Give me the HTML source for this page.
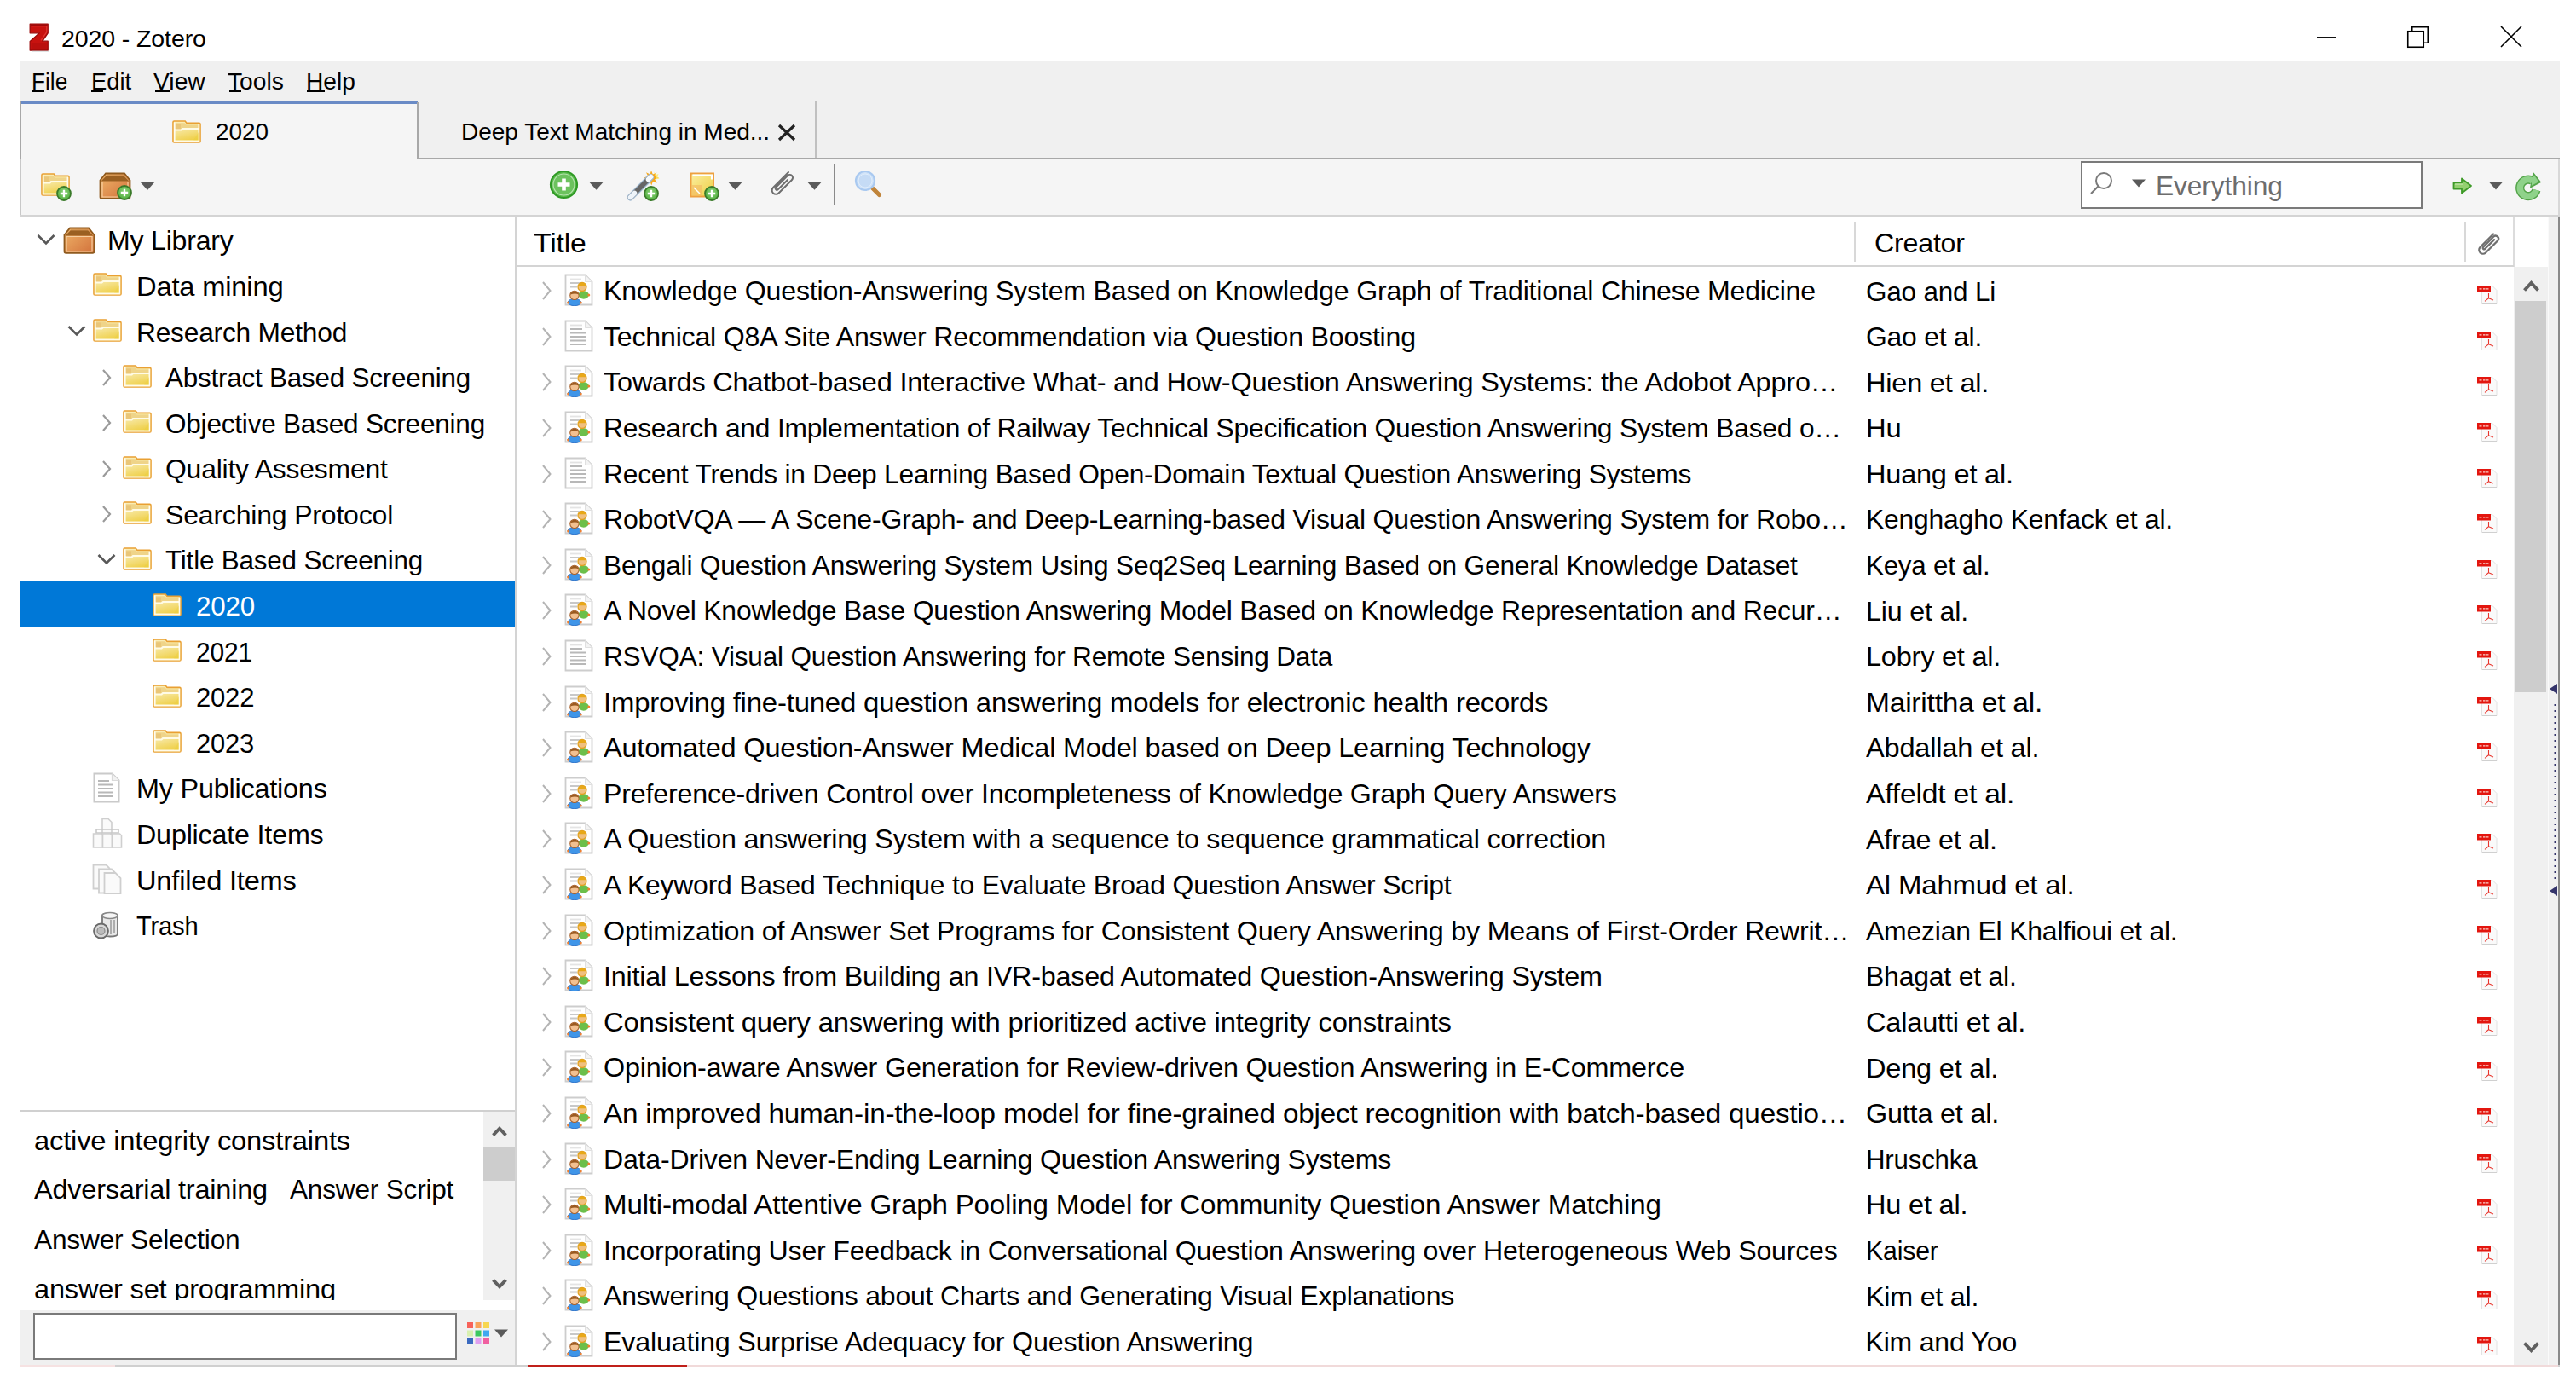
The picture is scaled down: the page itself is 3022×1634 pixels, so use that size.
<!DOCTYPE html>
<html><head><meta charset="utf-8"><title>2020 - Zotero</title>
<style>
html,body{margin:0;padding:0;}
body{width:3022px;height:1634px;position:relative;overflow:hidden;background:#fff;font-family:"Liberation Sans",sans-serif;}
.t{position:absolute;white-space:pre;line-height:normal;}
.r{position:absolute;box-sizing:border-box;}
.i{position:absolute;overflow:visible;}
</style></head><body>
<svg width="0" height="0" style="position:absolute"><defs>
<linearGradient id="gZ" x1="0" y1="0" x2="0" y2="1"><stop offset="0" stop-color="#e8332a"/><stop offset="1" stop-color="#a80f10"/></linearGradient>
<linearGradient id="gFold" x1="0" y1="0" x2="0.3" y2="1"><stop offset="0" stop-color="#fbf0c0"/><stop offset="0.5" stop-color="#f6e495"/><stop offset="1" stop-color="#efd04a"/></linearGradient>
<linearGradient id="gLib" x1="0" y1="0" x2="1" y2="1"><stop offset="0" stop-color="#efb56a"/><stop offset="1" stop-color="#d2703a"/></linearGradient>
<linearGradient id="gNote" x1="0" y1="0" x2="1" y2="1"><stop offset="0" stop-color="#fbeea0"/><stop offset="1" stop-color="#efcf45"/></linearGradient>
<radialGradient id="gGreen" cx="0.5" cy="0.4" r="0.6"><stop offset="0" stop-color="#8fd47c"/><stop offset="1" stop-color="#4fae3d"/></radialGradient>
<symbol id="zlogo" viewBox="0 0 26 34">
  <path d="M2.2 1.2H23.2V11.8L16.8 21.2H23.2V32H2.2V21.6L13.2 11.8H2.2Z" fill="#c8120f" stroke="#9a0808" stroke-width="1.3" stroke-linejoin="round"/>
  <path d="M3.6 3.6H21.8V10.6L15 20.4" fill="none" stroke="#e8403a" stroke-width="1.2" opacity="0.8"/>
  <path d="M3.8 23H21.6V30.4H3.8z" fill="#b00e0c" opacity="0.6"/>
  <path d="M3 2.2H22.5" stroke="#a00909" stroke-width="1.6"/>
  <path d="M4 33.2H24" stroke="#c0c8c8" stroke-width="1.2" opacity="0.6"/>
</symbol>
<symbol id="folder" viewBox="0 0 36 30">
  <path d="M2 2.3Q2 1 3.3 1H16.2L18 3.4H32.7Q34 3.4 34 4.7V24.7Q34 26 32.7 26H3.3Q2 26 2 24.7Z" fill="url(#gFold)" stroke="#e9a033" stroke-width="1.6"/>
  <path d="M4 3.2H15.6L17.4 5.4H32V10H4Z" fill="#efd489"/>
  <path d="M5 4.5h6v7h-6z" fill="#e9c477" opacity="0.9"/>
  <path d="M3.6 11.6H11.5L13 10H32.4" fill="none" stroke="#fffbe6" stroke-width="2"/>
  <path d="M3.7 2.6V24.5H32.4V4.8" fill="none" stroke="#fffdf2" stroke-width="1.8" opacity="0.95"/>
  <path d="M26 23.5L32 14V23.5z" fill="#ecd040" opacity="0.45"/>
</symbol>
<symbol id="library" viewBox="0 0 38 32">
  <path d="M8 1.5h22l6.5 8V29a1.8 1.8 0 0 1-1.8 1.8H3.3A1.8 1.8 0 0 1 1.5 29V9.5z" fill="url(#gLib)" stroke="#8f5a1e" stroke-width="1.8"/>
  <path d="M2.5 10.5L9 4h20l6.5 6.5z" fill="#9a6022"/>
  <path d="M9 4h20l6 6" fill="none" stroke="#c58a4a" stroke-width="1"/>
  <path d="M4 11.5h30v17.5H4z" fill="none" stroke="#f6cfa0" stroke-width="1.2"/>
</symbol>
<symbol id="chevdown" viewBox="0 0 24 16"><path d="M2.5 3L12 12.5L21.5 3" fill="none" stroke="#585858" stroke-width="2.6"/></symbol>
<symbol id="chevright" viewBox="0 0 16 24"><path d="M4 3l8 9-8 9" fill="none" stroke="#9a9a9a" stroke-width="2.2"/></symbol>
<symbol id="chevrightlt" viewBox="0 0 16 24"><path d="M3 2l8.5 10L3 22" fill="none" stroke="#b4b4b4" stroke-width="2"/></symbol>
<symbol id="docd" viewBox="0 0 34 38">
  <path d="M1.5 1.5h23l8 8v27h-31z" fill="#fff" stroke="#cdcdcd" stroke-width="1.8"/>
  <path d="M24.5 1.5v8h8" fill="#f3f3f3" stroke="#e0e0e0" stroke-width="1"/>
  <path d="M7 6.5h14" stroke="#e2e2e2" stroke-width="1.8"/>
  <path d="M7 11h14M7 15.5h19M7 20h19M7 24.5h19M7 29h19" stroke="#b8b8b8" stroke-width="1.8"/>
</symbol>
<symbol id="docp" viewBox="0 0 34 38">
  <path d="M1.5 1.5h23l8 8v27h-31z" fill="#fff" stroke="#cdcdcd" stroke-width="1.8"/>
  <path d="M24.5 1.5v8h8" fill="#f3f3f3" stroke="#e0e0e0" stroke-width="1"/>
  <path d="M7 6.5h13" stroke="#e4e4e4" stroke-width="1.8"/>
  <path d="M7 11h12M7 15.5h8" stroke="#c8c8c8" stroke-width="1.8"/>
  <g transform="translate(3.8 2.6) scale(0.86)">
  <ellipse cx="22" cy="26" rx="7" ry="5.5" fill="#6cbf4a"/>
  <circle cx="20" cy="15" r="5.8" fill="#f0c080" stroke="#e0a020" stroke-width="1.5"/>
  <path d="M14.5 13.5a5.8 5.8 0 0 1 11 0" fill="#e8a818"/>
  <circle cx="29" cy="26" r="1.8" fill="#f08030"/>
  </g>
  <g transform="translate(1.6 5.6) scale(0.86)">
  <ellipse cx="12" cy="32.5" rx="9" ry="4.8" fill="#3f95e8" stroke="#2a70c8" stroke-width="1"/>
  <circle cx="3.5" cy="33" r="1.8" fill="#f08030"/><circle cx="20.5" cy="33" r="1.8" fill="#f08030"/>
  <circle cx="12" cy="23" r="6" fill="#f2c090" stroke="#a8602a" stroke-width="1.2"/>
  <path d="M6.2 22a6 6 0 0 1 11.6 0c-3-1.5-7-1.5-11.6 0z" fill="#9a5a20"/>
  </g>
</symbol>
<symbol id="pubs" viewBox="0 0 36 36">
  <path d="M2.5 1.5h21l8 8v25h-29z" fill="#fff" stroke="#cacaca" stroke-width="2"/>
  <path d="M23.5 1.5v8h8" fill="#f2f2f2" stroke="#dadada" stroke-width="1.2"/>
  <path d="M7 10h13M7 14.5h18M7 19h18M7 23.5h18M7 28h18" stroke="#b8b8b8" stroke-width="1.8"/>
</symbol>
<symbol id="dups" viewBox="0 0 36 36">
  <g fill="#fafafa" stroke="#cfcfcf" stroke-width="1.6">
  <path d="M12 1.5h7l4 4v14h-11z"/>
  <path d="M5 14h26v4H5z" fill="none" stroke="#c8c8c8"/>
  <path d="M1.5 19h9l2 2v14h-11z"/><path d="M12.5 19h9l2 2v14h-11z"/><path d="M23.5 19h9l2 2v14h-11z"/>
  </g>
</symbol>
<symbol id="unfiled" viewBox="0 0 36 36">
  <g fill="#fafafa" stroke="#cfcfcf" stroke-width="1.8">
  <path d="M1.5 1.5h15l4 4v24h-19z"/>
  <path d="M8 6.5h15l4 4v24H8z"/>
  <path d="M14.5 11h13l6 6v18h-19z"/>
  </g>
</symbol>
<symbol id="trash" viewBox="0 0 36 36">
  <path d="M12 6.5c0-3 18-3 18 0v22c0 4-18 4-18 0z" fill="#e8e8e8" stroke="#777" stroke-width="1.8"/>
  <ellipse cx="21" cy="7" rx="9" ry="3.5" fill="#f5f5f5" stroke="#888" stroke-width="1.5"/>
  <path d="M22 12v17M26 12v16" stroke="#999" stroke-width="1.5"/>
  <ellipse cx="10.5" cy="25" rx="8.5" ry="8.5" fill="#d8d8d8" stroke="#6a6a6a" stroke-width="1.8"/>
  <ellipse cx="10.5" cy="25" rx="4.5" ry="4.5" fill="#bcbcbc" stroke="#888" stroke-width="1.2"/>
</symbol>
<symbol id="pdf" viewBox="0 0 26 24">
  <path d="M6.5 1.5h12.5l5 5v16h-17.5z" fill="#fafafa" stroke="#e2e2e2" stroke-width="1"/>
  <path d="M7 22.5h17" stroke="#d0d0d0" stroke-width="1"/>
  <rect x="1" y="1" width="16" height="7.5" fill="#e3160f"/>
  <path d="M3.5 4.8h3M8 4.8h2.5M12 4.8h2.5" stroke="#fbd0c8" stroke-width="1.3"/>
  <path d="M14.5 10v5.8l-4.5 3.6M14.5 15.8l5.5 2.2" fill="none" stroke="#e8342c" stroke-width="1.1"/>
</symbol>
<symbol id="plus" viewBox="0 0 18 18">
  <circle cx="9" cy="9" r="8" fill="url(#gGreen)" stroke="#3a7a2a" stroke-width="1.8"/>
  <path d="M9 4.8v8.4M4.8 9h8.4" stroke="#fff" stroke-width="2.3"/>
</symbol>
<symbol id="newcoll" viewBox="0 0 38 34">
  <use href="#folder" x="0" y="0" width="36" height="30"/>
  <use href="#plus" x="19" y="15" width="18" height="18"/>
</symbol>
<symbol id="newlib" viewBox="0 0 42 36">
  <use href="#library" x="1" y="2" width="38" height="32"/>
  <use href="#plus" x="22" y="17" width="18" height="18"/>
</symbol>
<symbol id="drop" viewBox="0 0 18 10"><path d="M0 0h18L9 10z" fill="#5a5a5a"/></symbol>
<symbol id="additem" viewBox="0 0 36 36">
  <circle cx="18.5" cy="17.5" r="15.5" fill="#5cbc4e" stroke="#2f9a25" stroke-width="2.2"/>
  <circle cx="18.5" cy="17.5" r="12.5" fill="#6cc25e" stroke="#b8e4b0" stroke-width="1.2"/>
  <path d="M18.5 10.5v14M11.5 17.5h14" stroke="#fff" stroke-width="4.6"/>
</symbol>
<symbol id="wand" viewBox="0 0 40 38">
  <path d="M30 1l1.8 4.6 4.6-2.2-2.4 4.4 5 1.6-4.8 1.8 2.4 4.8-4.6-2.2-1.8 4.8-1.6-4.8-4.6 2 2.2-4.6-4.8-1.8 4.8-1.6-2.2-4.6 4.6 2.2z" fill="#f7a81a"/>
  <path d="M33 2.5l2.5 3.5 3-1-1.2 3.5 2.2 2-3 .8" fill="#fde860" opacity="0.8"/>
  <path d="M5.5 32.5L29 9" stroke="#9fb8d0" stroke-width="8" stroke-linecap="round"/>
  <path d="M5.5 32.5L29 9" stroke="#666" stroke-width="5.6" stroke-linecap="round"/>
  <path d="M5.5 32.5L10.5 27.5" stroke="#eef4fa" stroke-width="5.6" stroke-linecap="round"/>
  <path d="M26.5 11.5L29.5 8.5" stroke="#f6f9fc" stroke-width="5.6" stroke-linecap="round"/>
  <use href="#plus" x="21" y="19" width="18" height="18"/>
</symbol>
<symbol id="note" viewBox="0 0 36 36">
  <path d="M1.5 2.5h26.5v27H1.5z" fill="url(#gNote)" stroke="#eea040" stroke-width="2"/>
  <path d="M3.5 4.5h22.5v5" fill="none" stroke="#fff" stroke-width="2.2"/>
  <path d="M2.5 16h12v13h-12z" fill="#f3b860" opacity="0.6"/>
  <path d="M5 19l7 7" stroke="#fff" stroke-width="1.5"/>
  <use href="#plus" x="17" y="17" width="18" height="18"/>
</symbol>
<symbol id="clip" viewBox="0 0 34 34">
  <path d="M26 3L8 21a4.5 4.5 0 0 0 6.5 6.5L30 12a3.5 3.5 0 0 0-5-5L11 21a1.8 1.8 0 0 0 2.5 2.5L25 12" fill="none" stroke="#6e6e6e" stroke-width="2" stroke-linecap="round"/>
</symbol>
<symbol id="clipsm" viewBox="0 0 30 30">
  <path d="M21 2.5L5.5 18a4.6 4.6 0 0 0 6.5 6.5L26.2 10.3a3.4 3.4 0 0 0-4.8-4.8L9 17.9a1.5 1.5 0 0 0 2.1 2.1L22 9.1" fill="none" stroke="#707070" stroke-width="2.3" stroke-linecap="round"/>
</symbol>
<symbol id="lookup" viewBox="0 0 34 34">
  <path d="M20 20l9.5 9.5" stroke="#c0843a" stroke-width="5" stroke-linecap="round"/>
  <circle cx="13" cy="13" r="11" fill="#cfe2f8" stroke="#a9c9f0" stroke-width="2.2"/>
  <circle cx="13" cy="13" r="8" fill="#c5dbf5" stroke="#e0edfb" stroke-width="1"/>
</symbol>
<symbol id="mag" viewBox="0 0 32 32">
  <circle cx="18" cy="13" r="9" fill="none" stroke="#7a7a7a" stroke-width="2"/>
  <path d="M11.5 19.5L3 28" stroke="#7a7a7a" stroke-width="2.2"/>
</symbol>
<symbol id="garrow" viewBox="0 0 26 26">
  <path d="M2.5 9.5h9.5V4.5l11 8.5-11 8.5v-5H2.5z" fill="#94d070" stroke="#3e9a28" stroke-width="1.8" stroke-linejoin="round"/><path d="M4 11h9" stroke="#c8eab0" stroke-width="1.2"/>
</symbol>
<symbol id="refresh" viewBox="0 0 34 34">
  <path d="M25.4 20.9A9.75 9.75 0 1 1 20.9 9.96" fill="none" stroke="#52a348" stroke-width="10.2"/>
  <path d="M22 1.2L30.2 11.6L18.8 17.6z" fill="#52a348" stroke="#52a348" stroke-width="1.4" stroke-linejoin="round"/>
  <path d="M25.4 20.9A9.75 9.75 0 1 1 20.9 9.96" fill="none" stroke="#8fd28a" stroke-width="7.4"/>
  <path d="M22.8 3.6L28.4 11.2L19.8 15.8L20.2 9.6z" fill="#8fd28a"/>
</symbol>
<symbol id="scrup" viewBox="0 0 19 16"><path d="M1.5 13.5L9.5 5l8 8.5" fill="none" stroke="#606060" stroke-width="4"/></symbol>
<symbol id="scrdown" viewBox="0 0 19 16"><path d="M1.5 2.5L9.5 11l8-8.5" fill="none" stroke="#606060" stroke-width="4"/></symbol>
<symbol id="colors" viewBox="0 0 28 28">
  <rect x="1" y="1" width="7" height="7" fill="#f7625a"/><rect x="10.5" y="1" width="7" height="7" fill="#f9a25a"/><rect x="20" y="1" width="7" height="7" fill="#f7d650"/>
  <rect x="1" y="10.5" width="7" height="7" fill="#d8f0b0"/><rect x="10.5" y="10.5" width="7" height="7" fill="#3cc860"/><rect x="20" y="10.5" width="7" height="7" fill="#40a8f0"/>
  <rect x="1" y="20" width="7" height="7" fill="#3a6ac0"/><rect x="10.5" y="20" width="7" height="7" fill="#e0a0f0"/><rect x="20" y="20" width="7" height="7" fill="#f060a0"/>
</symbol>
<symbol id="splitmark" viewBox="0 0 14 252">
  <path d="M11 2L2 8l9 6z" fill="#34346a"/>
  <g fill="#34346a">
  <rect x="7.5" y="26" width="2" height="2"/><rect x="7.5" y="33" width="2" height="2"/><rect x="7.5" y="40" width="2" height="2"/><rect x="7.5" y="47" width="2" height="2"/><rect x="7.5" y="54" width="2" height="2"/><rect x="7.5" y="61" width="2" height="2"/><rect x="7.5" y="68" width="2" height="2"/><rect x="7.5" y="75" width="2" height="2"/><rect x="7.5" y="82" width="2" height="2"/><rect x="7.5" y="89" width="2" height="2"/><rect x="7.5" y="96" width="2" height="2"/><rect x="7.5" y="103" width="2" height="2"/><rect x="7.5" y="110" width="2" height="2"/><rect x="7.5" y="117" width="2" height="2"/><rect x="7.5" y="124" width="2" height="2"/><rect x="7.5" y="131" width="2" height="2"/><rect x="7.5" y="138" width="2" height="2"/><rect x="7.5" y="145" width="2" height="2"/><rect x="7.5" y="152" width="2" height="2"/><rect x="7.5" y="159" width="2" height="2"/><rect x="7.5" y="166" width="2" height="2"/><rect x="7.5" y="173" width="2" height="2"/><rect x="7.5" y="180" width="2" height="2"/><rect x="7.5" y="187" width="2" height="2"/><rect x="7.5" y="194" width="2" height="2"/><rect x="7.5" y="201" width="2" height="2"/><rect x="7.5" y="208" width="2" height="2"/><rect x="7.5" y="215" width="2" height="2"/><rect x="7.5" y="222" width="2" height="2"/><rect x="7.5" y="229" width="2" height="2"/>
  </g>
  <path d="M11 239l-9 6 9 6z" fill="#34346a"/>
</symbol>
</defs>
</svg>
<svg class="i" style="left:33px;top:27px;" width="26" height="34"><use href="#zlogo"/></svg>
<div class="t" style="left:72px;top:29.66px;font-size:28px;color:#000;letter-spacing:-0.1px;transform:scaleX(1.0181);transform-origin:0 0;">2020 - Zotero</div>
<div class="r" style="left:2718px;top:43px;width:23px;height:2px;background:#111;"></div>
<svg class="i" style="left:2820px;top:28px" width="34" height="34"><rect x="4.75" y="8.75" width="18.5" height="18.5" fill="none" stroke="#000" stroke-width="1.6"/><path d="M9.75 8.75V3.75h18.5v18.5h-5" fill="none" stroke="#000" stroke-width="1.6"/></svg>
<svg class="i" style="left:2930px;top:27px" width="32" height="32"><path d="M4 4L28 28M28 4L4 28" stroke="#000" stroke-width="1.6"/></svg>
<div class="r" style="left:23px;top:71px;width:2980px;height:47px;background:#f0f0f0;"></div>
<div class="t" style="left:37px;top:79.66px;font-size:28px;color:#000;letter-spacing:0px;transform:scaleX(0.9364);transform-origin:0 0;">File</div>
<div class="t" style="left:107px;top:79.66px;font-size:28px;color:#000;letter-spacing:0px;transform:scaleX(0.9771);transform-origin:0 0;">Edit</div>
<div class="t" style="left:180px;top:79.66px;font-size:28px;color:#000;letter-spacing:0px;transform:scaleX(1.0100);transform-origin:0 0;">View</div>
<div class="t" style="left:267px;top:79.66px;font-size:28px;color:#000;letter-spacing:0px;transform:scaleX(1.0078);transform-origin:0 0;">Tools</div>
<div class="t" style="left:359px;top:79.66px;font-size:28px;color:#000;letter-spacing:0px;transform:scaleX(1.0053);transform-origin:0 0;">Help</div>
<div class="r" style="left:38px;top:106px;width:14px;height:2px;background:#000;"></div>
<div class="r" style="left:107px;top:106px;width:14px;height:2px;background:#000;"></div>
<div class="r" style="left:182px;top:106px;width:17px;height:2px;background:#000;"></div>
<div class="r" style="left:269px;top:106px;width:14px;height:2px;background:#000;"></div>
<div class="r" style="left:360px;top:106px;width:21px;height:2px;background:#000;"></div>
<div class="r" style="left:23px;top:118px;width:2980px;height:69px;background:#f0f0f0;"></div>
<div class="r" style="left:23px;top:118px;width:467px;height:69px;background:#f5f5f5;"></div>
<div class="r" style="left:25px;top:118px;width:465px;height:4px;background:#6a8bc6;"></div>
<div class="r" style="left:23px;top:118px;width:2px;height:69px;background:#a8a8a8;"></div>
<div class="r" style="left:489px;top:120px;width:2px;height:68px;background:#a8a8a8;"></div>
<div class="r" style="left:956px;top:118px;width:2px;height:68px;background:#c0c0c0;"></div>
<div class="r" style="left:490px;top:185px;width:2513px;height:2px;background:#a8a8a8;"></div>
<svg class="i" style="left:201px;top:141px;" width="36" height="30"><use href="#folder"/></svg>
<div class="t" style="left:253px;top:138.66px;font-size:28px;color:#000;letter-spacing:0px;transform:scaleX(0.9951);transform-origin:0 0;">2020</div>
<div class="t" style="left:541px;top:138.66px;font-size:28px;color:#000;letter-spacing:0px;transform:scaleX(1.0000);transform-origin:0 0;">Deep Text Matching in Med...</div>
<svg class="i" style="left:911px;top:144px" width="24" height="22"><path d="M3 3L21 20M21 3L3 20" stroke="#222" stroke-width="3.2"/></svg>
<div class="r" style="left:23px;top:187px;width:2980px;height:66px;background:#f5f5f5;"></div>
<div class="r" style="left:23px;top:187px;width:2px;height:67px;background:#c8c8c8;"></div>
<div class="r" style="left:23px;top:252px;width:2980px;height:2px;background:#d4d4d4;"></div>
<div class="r" style="left:3001px;top:187px;width:2px;height:66px;background:#d8d8d8;"></div>
<svg class="i" style="left:47px;top:203px;" width="38" height="34"><use href="#newcoll"/></svg>
<svg class="i" style="left:115px;top:200px;" width="42" height="36"><use href="#newlib"/></svg>
<svg class="i" style="left:164px;top:213px;" width="18" height="10"><use href="#drop"/></svg>
<svg class="i" style="left:643px;top:199px;" width="36" height="36"><use href="#additem"/></svg>
<svg class="i" style="left:691px;top:213px;" width="17" height="10"><use href="#drop"/></svg>
<svg class="i" style="left:734px;top:199px;" width="40" height="38"><use href="#wand"/></svg>
<svg class="i" style="left:809px;top:201px;" width="36" height="36"><use href="#note"/></svg>
<svg class="i" style="left:854px;top:213px;" width="17" height="10"><use href="#drop"/></svg>
<svg class="i" style="left:899px;top:199px;" width="34" height="34"><use href="#clip"/></svg>
<svg class="i" style="left:947px;top:213px;" width="17" height="10"><use href="#drop"/></svg>
<div class="r" style="left:978px;top:192px;width:1px;height:49px;background:#8a8a8a;"></div>
<div class="r" style="left:979px;top:192px;width:1px;height:49px;background:#5e5e5e;"></div>
<svg class="i" style="left:1002px;top:199px;" width="34" height="34"><use href="#lookup"/></svg>
<div class="r" style="left:2441px;top:189px;width:401px;height:56px;background:#fff;border:2px solid #7a7a7a"></div>
<svg class="i" style="left:2450px;top:199px;" width="32" height="32"><use href="#mag"/></svg>
<svg class="i" style="left:2501px;top:210px;" width="16" height="10"><use href="#drop"/></svg>
<div class="t" style="left:2529px;top:200.04px;font-size:32px;color:#6d6d6d;letter-spacing:-0.1px;transform:scaleX(0.9912);transform-origin:0 0;">Everything</div>
<svg class="i" style="left:2876px;top:205px;" width="26" height="26"><use href="#garrow"/></svg>
<svg class="i" style="left:2920px;top:213px;" width="16" height="10"><use href="#drop"/></svg>
<svg class="i" style="left:2950px;top:202px;" width="34" height="34"><use href="#refresh"/></svg>
<div class="r" style="left:23px;top:254px;width:582px;height:1049px;background:#fff;"></div>
<div class="r" style="left:604px;top:254px;width:2px;height:1348px;background:#d4d4d4;"></div>
<svg class="i" style="left:42px;top:273px;" width="24" height="16"><use href="#chevdown"/></svg>
<svg class="i" style="left:74px;top:266px;" width="38" height="32"><use href="#library"/></svg>
<div class="t" style="left:125.6px;top:264.34px;font-size:32px;color:#000;letter-spacing:-0.2px;transform:scaleX(1.0014);transform-origin:0 0;">My Library</div>
<svg class="i" style="left:108px;top:320px;" width="36" height="30"><use href="#folder"/></svg>
<div class="t" style="left:159.5px;top:317.93px;font-size:32px;color:#000;letter-spacing:-0.2px;transform:scaleX(1.0228);transform-origin:0 0;">Data mining</div>
<svg class="i" style="left:78px;top:380px;" width="24" height="16"><use href="#chevdown"/></svg>
<svg class="i" style="left:108px;top:374px;" width="36" height="30"><use href="#folder"/></svg>
<div class="t" style="left:159.5px;top:371.52px;font-size:32px;color:#000;letter-spacing:-0.2px;transform:scaleX(0.9899);transform-origin:0 0;">Research Method</div>
<svg class="i" style="left:117px;top:431px;" width="16" height="24"><use href="#chevright"/></svg>
<svg class="i" style="left:143px;top:428px;" width="36" height="30"><use href="#folder"/></svg>
<div class="t" style="left:194.2px;top:425.11px;font-size:32px;color:#000;letter-spacing:-0.2px;transform:scaleX(0.9804);transform-origin:0 0;">Abstract Based Screening</div>
<svg class="i" style="left:117px;top:484px;" width="16" height="24"><use href="#chevright"/></svg>
<svg class="i" style="left:143px;top:481px;" width="36" height="30"><use href="#folder"/></svg>
<div class="t" style="left:194.2px;top:478.70px;font-size:32px;color:#000;letter-spacing:-0.2px;transform:scaleX(0.9842);transform-origin:0 0;">Objective Based Screening</div>
<svg class="i" style="left:117px;top:538px;" width="16" height="24"><use href="#chevright"/></svg>
<svg class="i" style="left:143px;top:535px;" width="36" height="30"><use href="#folder"/></svg>
<div class="t" style="left:194.2px;top:532.28px;font-size:32px;color:#000;letter-spacing:-0.2px;transform:scaleX(0.9962);transform-origin:0 0;">Quality Assesment</div>
<svg class="i" style="left:117px;top:591px;" width="16" height="24"><use href="#chevright"/></svg>
<svg class="i" style="left:143px;top:588px;" width="36" height="30"><use href="#folder"/></svg>
<div class="t" style="left:194.2px;top:585.87px;font-size:32px;color:#000;letter-spacing:-0.2px;transform:scaleX(1.0011);transform-origin:0 0;">Searching Protocol</div>
<svg class="i" style="left:113px;top:648px;" width="24" height="16"><use href="#chevdown"/></svg>
<svg class="i" style="left:143px;top:642px;" width="36" height="30"><use href="#folder"/></svg>
<div class="t" style="left:194.2px;top:639.46px;font-size:32px;color:#000;letter-spacing:-0.2px;transform:scaleX(0.9820);transform-origin:0 0;">Title Based Screening</div>
<div class="r" style="left:23px;top:682px;width:581px;height:54px;background:#0078d7;"></div>
<svg class="i" style="left:178px;top:696px;" width="36" height="30"><use href="#folder"/></svg>
<div class="t" style="left:229.8px;top:693.05px;font-size:32px;color:#fff;letter-spacing:-0.2px;transform:scaleX(0.9783);transform-origin:0 0;">2020</div>
<svg class="i" style="left:178px;top:749px;" width="36" height="30"><use href="#folder"/></svg>
<div class="t" style="left:229.8px;top:746.64px;font-size:32px;color:#000;letter-spacing:-0.2px;transform:scaleX(0.9362);transform-origin:0 0;">2021</div>
<svg class="i" style="left:178px;top:803px;" width="36" height="30"><use href="#folder"/></svg>
<div class="t" style="left:229.8px;top:800.24px;font-size:32px;color:#000;letter-spacing:-0.2px;transform:scaleX(0.9696);transform-origin:0 0;">2022</div>
<svg class="i" style="left:178px;top:856px;" width="36" height="30"><use href="#folder"/></svg>
<div class="t" style="left:229.8px;top:853.82px;font-size:32px;color:#000;letter-spacing:-0.2px;transform:scaleX(0.9652);transform-origin:0 0;">2023</div>
<svg class="i" style="left:108px;top:906px;" width="36" height="36"><use href="#pubs"/></svg>
<div class="t" style="left:159.5px;top:907.41px;font-size:32px;color:#000;letter-spacing:-0.2px;transform:scaleX(1.0114);transform-origin:0 0;">My Publications</div>
<svg class="i" style="left:108px;top:959px;" width="36" height="36"><use href="#dups"/></svg>
<div class="t" style="left:159.5px;top:961.00px;font-size:32px;color:#000;letter-spacing:-0.2px;transform:scaleX(1.0092);transform-origin:0 0;">Duplicate Items</div>
<svg class="i" style="left:108px;top:1013px;" width="36" height="36"><use href="#unfiled"/></svg>
<div class="t" style="left:159.5px;top:1014.60px;font-size:32px;color:#000;letter-spacing:-0.2px;transform:scaleX(1.0191);transform-origin:0 0;">Unfiled Items</div>
<svg class="i" style="left:108px;top:1067px;" width="36" height="36"><use href="#trash"/></svg>
<div class="t" style="left:159.5px;top:1068.18px;font-size:32px;color:#000;letter-spacing:-0.2px;transform:scaleX(0.9115);transform-origin:0 0;">Trash</div>
<div class="r" style="left:23px;top:1302px;width:581px;height:2px;background:#d0d0d0;"></div>
<div class="t" style="left:40px;top:1320.04px;font-size:32px;color:#000;letter-spacing:-0.2px;transform:scaleX(1.0232);transform-origin:0 0;">active integrity constraints</div>
<div class="t" style="left:40px;top:1377.04px;font-size:32px;color:#000;letter-spacing:-0.2px;transform:scaleX(1.0149);transform-origin:0 0;">Adversarial training</div>
<div class="t" style="left:340px;top:1377.04px;font-size:32px;color:#000;letter-spacing:-0.2px;transform:scaleX(0.9867);transform-origin:0 0;">Answer Script</div>
<div class="t" style="left:40px;top:1436.04px;font-size:32px;color:#000;letter-spacing:-0.2px;transform:scaleX(0.9897);transform-origin:0 0;">Answer Selection</div>
<div style="position:absolute;left:23px;top:1490px;width:540px;height:35px;overflow:hidden">
<div class="t" style="left:17px;top:3.74px;font-size:32px;color:#000;letter-spacing:-0.2px;transform:scaleX(1.0176);transform-origin:0 0;">answer set programming</div>
</div>
<div class="r" style="left:567px;top:1304px;width:37px;height:221px;background:#f0f0f0;"></div>
<div class="r" style="left:567px;top:1345px;width:37px;height:40px;background:#cdcdcd;"></div>
<svg class="i" style="left:577px;top:1319px;" width="18" height="15"><use href="#scrup"/></svg>
<svg class="i" style="left:577px;top:1499px;" width="18" height="15"><use href="#scrdown"/></svg>
<div class="r" style="left:23px;top:1537px;width:581px;height:64px;background:#f0f0f0;"></div>
<div class="r" style="left:39px;top:1540px;width:497px;height:55px;background:#fff;border:2px solid #7a7a7a"></div>
<svg class="i" style="left:547px;top:1550px;" width="28" height="28"><use href="#colors"/></svg>
<svg class="i" style="left:580px;top:1559px;" width="16" height="10"><use href="#drop"/></svg>
<div class="r" style="left:606px;top:254px;width:2397px;height:1348px;background:#fff;"></div>
<div class="t" style="left:626px;top:267.04px;font-size:32px;color:#000;letter-spacing:-0.2px;transform:scaleX(1.0561);transform-origin:0 0;">Title</div>
<div class="r" style="left:2175px;top:260px;width:2px;height:47px;background:#d8d8d8;"></div>
<div class="t" style="left:2199px;top:267.04px;font-size:32px;color:#000;letter-spacing:-0.2px;transform:scaleX(1.0048);transform-origin:0 0;">Creator</div>
<div class="r" style="left:2891px;top:260px;width:2px;height:47px;background:#d8d8d8;"></div>
<svg class="i" style="left:2904px;top:272px;" width="30" height="30"><use href="#clipsm"/></svg>
<div class="r" style="left:2948px;top:254px;width:2px;height:59px;background:#dcdcdc;"></div>
<div class="r" style="left:606px;top:311px;width:2343px;height:2px;background:#d4d4d4;"></div>
<svg class="i" style="left:634px;top:329px;" width="16" height="24"><use href="#chevrightlt"/></svg>
<svg class="i" style="left:662px;top:321px;" width="34" height="38"><use href="#docp"/></svg>
<div style="position:absolute;left:700px;top:313px;width:1470px;height:54px;overflow:hidden">
<div class="t" style="left:7.5px;top:10.24px;font-size:32px;color:#000;letter-spacing:-0.2px;transform:scaleX(1.0034);transform-origin:0 0;">Knowledge Question-Answering System Based on Knowledge Graph of Traditional Chinese Medicine</div>
</div>
<div class="t" style="left:2188.5px;top:323.54px;font-size:32px;color:#000;letter-spacing:-0.2px;transform:scaleX(0.9837);transform-origin:0 0;">Gao and Li</div>
<svg class="i" style="left:2905px;top:334px;" width="26" height="24"><use href="#pdf"/></svg>
<svg class="i" style="left:634px;top:383px;" width="16" height="24"><use href="#chevrightlt"/></svg>
<svg class="i" style="left:662px;top:375px;" width="34" height="38"><use href="#docd"/></svg>
<div style="position:absolute;left:700px;top:367px;width:1470px;height:54px;overflow:hidden">
<div class="t" style="left:7.5px;top:10.24px;font-size:32px;color:#000;letter-spacing:-0.2px;transform:scaleX(1.0031);transform-origin:0 0;">Technical Q8A Site Answer Recommendation via Question Boosting</div>
</div>
<div class="t" style="left:2188.5px;top:377.13px;font-size:32px;color:#000;letter-spacing:-0.2px;transform:scaleX(0.9948);transform-origin:0 0;">Gao et al.</div>
<svg class="i" style="left:2905px;top:388px;" width="26" height="24"><use href="#pdf"/></svg>
<svg class="i" style="left:634px;top:436px;" width="16" height="24"><use href="#chevrightlt"/></svg>
<svg class="i" style="left:662px;top:428px;" width="34" height="38"><use href="#docp"/></svg>
<div style="position:absolute;left:700px;top:420px;width:1470px;height:54px;overflow:hidden">
<div class="t" style="left:7.5px;top:10.24px;font-size:32px;color:#000;letter-spacing:-0.2px;transform:scaleX(1.0144);transform-origin:0 0;">Towards Chatbot-based Interactive What- and How-Question Answering Systems: the Adobot Appro…</div>
</div>
<div class="t" style="left:2188.5px;top:430.72px;font-size:32px;color:#000;letter-spacing:-0.2px;transform:scaleX(1.0158);transform-origin:0 0;">Hien et al.</div>
<svg class="i" style="left:2905px;top:441px;" width="26" height="24"><use href="#pdf"/></svg>
<svg class="i" style="left:634px;top:490px;" width="16" height="24"><use href="#chevrightlt"/></svg>
<svg class="i" style="left:662px;top:482px;" width="34" height="38"><use href="#docp"/></svg>
<div style="position:absolute;left:700px;top:474px;width:1470px;height:54px;overflow:hidden">
<div class="t" style="left:7.5px;top:10.24px;font-size:32px;color:#000;letter-spacing:-0.2px;transform:scaleX(0.9921);transform-origin:0 0;">Research and Implementation of Railway Technical Specification Question Answering System Based o…</div>
</div>
<div class="t" style="left:2188.5px;top:484.31px;font-size:32px;color:#000;letter-spacing:-0.2px;transform:scaleX(1.0231);transform-origin:0 0;">Hu</div>
<svg class="i" style="left:2905px;top:495px;" width="26" height="24"><use href="#pdf"/></svg>
<svg class="i" style="left:634px;top:544px;" width="16" height="24"><use href="#chevrightlt"/></svg>
<svg class="i" style="left:662px;top:536px;" width="34" height="38"><use href="#docd"/></svg>
<div style="position:absolute;left:700px;top:528px;width:1470px;height:54px;overflow:hidden">
<div class="t" style="left:7.5px;top:10.24px;font-size:32px;color:#000;letter-spacing:-0.2px;transform:scaleX(0.9918);transform-origin:0 0;">Recent Trends in Deep Learning Based Open-Domain Textual Question Answering Systems</div>
</div>
<div class="t" style="left:2188.5px;top:537.90px;font-size:32px;color:#000;letter-spacing:-0.2px;transform:scaleX(1.0155);transform-origin:0 0;">Huang et al.</div>
<svg class="i" style="left:2905px;top:549px;" width="26" height="24"><use href="#pdf"/></svg>
<svg class="i" style="left:634px;top:597px;" width="16" height="24"><use href="#chevrightlt"/></svg>
<svg class="i" style="left:662px;top:589px;" width="34" height="38"><use href="#docp"/></svg>
<div style="position:absolute;left:700px;top:581px;width:1470px;height:54px;overflow:hidden">
<div class="t" style="left:7.5px;top:10.24px;font-size:32px;color:#000;letter-spacing:-0.2px;transform:scaleX(1.0003);transform-origin:0 0;">RobotVQA — A Scene-Graph- and Deep-Learning-based Visual Question Answering System for Robo…</div>
</div>
<div class="t" style="left:2188.5px;top:591.49px;font-size:32px;color:#000;letter-spacing:-0.2px;transform:scaleX(0.9953);transform-origin:0 0;">Kenghagho Kenfack et al.</div>
<svg class="i" style="left:2905px;top:602px;" width="26" height="24"><use href="#pdf"/></svg>
<svg class="i" style="left:634px;top:651px;" width="16" height="24"><use href="#chevrightlt"/></svg>
<svg class="i" style="left:662px;top:643px;" width="34" height="38"><use href="#docp"/></svg>
<div style="position:absolute;left:700px;top:635px;width:1470px;height:54px;overflow:hidden">
<div class="t" style="left:7.5px;top:10.24px;font-size:32px;color:#000;letter-spacing:-0.2px;transform:scaleX(0.9895);transform-origin:0 0;">Bengali Question Answering System Using Seq2Seq Learning Based on General Knowledge Dataset</div>
</div>
<div class="t" style="left:2188.5px;top:645.08px;font-size:32px;color:#000;letter-spacing:-0.2px;transform:scaleX(0.9767);transform-origin:0 0;">Keya et al.</div>
<svg class="i" style="left:2905px;top:656px;" width="26" height="24"><use href="#pdf"/></svg>
<svg class="i" style="left:634px;top:704px;" width="16" height="24"><use href="#chevrightlt"/></svg>
<svg class="i" style="left:662px;top:696px;" width="34" height="38"><use href="#docp"/></svg>
<div style="position:absolute;left:700px;top:688px;width:1470px;height:54px;overflow:hidden">
<div class="t" style="left:7.5px;top:10.24px;font-size:32px;color:#000;letter-spacing:-0.2px;transform:scaleX(0.9974);transform-origin:0 0;">A Novel Knowledge Base Question Answering Model Based on Knowledge Representation and Recur…</div>
</div>
<div class="t" style="left:2188.5px;top:698.67px;font-size:32px;color:#000;letter-spacing:-0.2px;transform:scaleX(1.0078);transform-origin:0 0;">Liu et al.</div>
<svg class="i" style="left:2905px;top:709px;" width="26" height="24"><use href="#pdf"/></svg>
<svg class="i" style="left:634px;top:758px;" width="16" height="24"><use href="#chevrightlt"/></svg>
<svg class="i" style="left:662px;top:750px;" width="34" height="38"><use href="#docd"/></svg>
<div style="position:absolute;left:700px;top:742px;width:1470px;height:54px;overflow:hidden">
<div class="t" style="left:7.5px;top:10.24px;font-size:32px;color:#000;letter-spacing:-0.2px;transform:scaleX(0.9864);transform-origin:0 0;">RSVQA: Visual Question Answering for Remote Sensing Data</div>
</div>
<div class="t" style="left:2188.5px;top:752.26px;font-size:32px;color:#000;letter-spacing:-0.2px;transform:scaleX(1.0144);transform-origin:0 0;">Lobry et al.</div>
<svg class="i" style="left:2905px;top:763px;" width="26" height="24"><use href="#pdf"/></svg>
<svg class="i" style="left:634px;top:812px;" width="16" height="24"><use href="#chevrightlt"/></svg>
<svg class="i" style="left:662px;top:804px;" width="34" height="38"><use href="#docp"/></svg>
<div style="position:absolute;left:700px;top:796px;width:1470px;height:54px;overflow:hidden">
<div class="t" style="left:7.5px;top:10.24px;font-size:32px;color:#000;letter-spacing:-0.2px;transform:scaleX(1.0291);transform-origin:0 0;">Improving fine-tuned question answering models for electronic health records</div>
</div>
<div class="t" style="left:2188.5px;top:805.85px;font-size:32px;color:#000;letter-spacing:-0.2px;transform:scaleX(1.0472);transform-origin:0 0;">Mairittha et al.</div>
<svg class="i" style="left:2905px;top:817px;" width="26" height="24"><use href="#pdf"/></svg>
<svg class="i" style="left:634px;top:865px;" width="16" height="24"><use href="#chevrightlt"/></svg>
<svg class="i" style="left:662px;top:857px;" width="34" height="38"><use href="#docp"/></svg>
<div style="position:absolute;left:700px;top:849px;width:1470px;height:54px;overflow:hidden">
<div class="t" style="left:7.5px;top:10.24px;font-size:32px;color:#000;letter-spacing:-0.2px;transform:scaleX(1.0163);transform-origin:0 0;">Automated Question-Answer Medical Model based on Deep Learning Technology</div>
</div>
<div class="t" style="left:2188.5px;top:859.44px;font-size:32px;color:#000;letter-spacing:-0.2px;transform:scaleX(1.0178);transform-origin:0 0;">Abdallah et al.</div>
<svg class="i" style="left:2905px;top:870px;" width="26" height="24"><use href="#pdf"/></svg>
<svg class="i" style="left:634px;top:919px;" width="16" height="24"><use href="#chevrightlt"/></svg>
<svg class="i" style="left:662px;top:911px;" width="34" height="38"><use href="#docp"/></svg>
<div style="position:absolute;left:700px;top:903px;width:1470px;height:54px;overflow:hidden">
<div class="t" style="left:7.5px;top:10.24px;font-size:32px;color:#000;letter-spacing:-0.2px;transform:scaleX(1.0062);transform-origin:0 0;">Preference-driven Control over Incompleteness of Knowledge Graph Query Answers</div>
</div>
<div class="t" style="left:2188.5px;top:913.03px;font-size:32px;color:#000;letter-spacing:-0.2px;transform:scaleX(1.0521);transform-origin:0 0;">Affeldt et al.</div>
<svg class="i" style="left:2905px;top:924px;" width="26" height="24"><use href="#pdf"/></svg>
<svg class="i" style="left:634px;top:972px;" width="16" height="24"><use href="#chevrightlt"/></svg>
<svg class="i" style="left:662px;top:964px;" width="34" height="38"><use href="#docp"/></svg>
<div style="position:absolute;left:700px;top:956px;width:1470px;height:54px;overflow:hidden">
<div class="t" style="left:7.5px;top:10.24px;font-size:32px;color:#000;letter-spacing:-0.2px;transform:scaleX(1.0075);transform-origin:0 0;">A Question answering System with a sequence to sequence grammatical correction</div>
</div>
<div class="t" style="left:2188.5px;top:966.62px;font-size:32px;color:#000;letter-spacing:-0.2px;transform:scaleX(1.0100);transform-origin:0 0;">Afrae et al.</div>
<svg class="i" style="left:2905px;top:977px;" width="26" height="24"><use href="#pdf"/></svg>
<svg class="i" style="left:634px;top:1026px;" width="16" height="24"><use href="#chevrightlt"/></svg>
<svg class="i" style="left:662px;top:1018px;" width="34" height="38"><use href="#docp"/></svg>
<div style="position:absolute;left:700px;top:1010px;width:1470px;height:54px;overflow:hidden">
<div class="t" style="left:7.5px;top:10.24px;font-size:32px;color:#000;letter-spacing:-0.2px;transform:scaleX(0.9961);transform-origin:0 0;">A Keyword Based Technique to Evaluate Broad Question Answer Script</div>
</div>
<div class="t" style="left:2188.5px;top:1020.21px;font-size:32px;color:#000;letter-spacing:-0.2px;transform:scaleX(1.0321);transform-origin:0 0;">Al Mahmud et al.</div>
<svg class="i" style="left:2905px;top:1031px;" width="26" height="24"><use href="#pdf"/></svg>
<svg class="i" style="left:634px;top:1080px;" width="16" height="24"><use href="#chevrightlt"/></svg>
<svg class="i" style="left:662px;top:1072px;" width="34" height="38"><use href="#docp"/></svg>
<div style="position:absolute;left:700px;top:1064px;width:1470px;height:54px;overflow:hidden">
<div class="t" style="left:7.5px;top:10.24px;font-size:32px;color:#000;letter-spacing:-0.2px;transform:scaleX(1.0082);transform-origin:0 0;">Optimization of Answer Set Programs for Consistent Query Answering by Means of First-Order Rewrit…</div>
</div>
<div class="t" style="left:2188.5px;top:1073.80px;font-size:32px;color:#000;letter-spacing:-0.2px;transform:scaleX(0.9978);transform-origin:0 0;">Amezian El Khalfioui et al.</div>
<svg class="i" style="left:2905px;top:1085px;" width="26" height="24"><use href="#pdf"/></svg>
<svg class="i" style="left:634px;top:1133px;" width="16" height="24"><use href="#chevrightlt"/></svg>
<svg class="i" style="left:662px;top:1125px;" width="34" height="38"><use href="#docp"/></svg>
<div style="position:absolute;left:700px;top:1117px;width:1470px;height:54px;overflow:hidden">
<div class="t" style="left:7.5px;top:10.24px;font-size:32px;color:#000;letter-spacing:-0.2px;transform:scaleX(1.0085);transform-origin:0 0;">Initial Lessons from Building an IVR-based Automated Question-Answering System</div>
</div>
<div class="t" style="left:2188.5px;top:1127.39px;font-size:32px;color:#000;letter-spacing:-0.2px;transform:scaleX(0.9977);transform-origin:0 0;">Bhagat et al.</div>
<svg class="i" style="left:2905px;top:1138px;" width="26" height="24"><use href="#pdf"/></svg>
<svg class="i" style="left:634px;top:1187px;" width="16" height="24"><use href="#chevrightlt"/></svg>
<svg class="i" style="left:662px;top:1179px;" width="34" height="38"><use href="#docp"/></svg>
<div style="position:absolute;left:700px;top:1171px;width:1470px;height:54px;overflow:hidden">
<div class="t" style="left:7.5px;top:10.24px;font-size:32px;color:#000;letter-spacing:-0.2px;transform:scaleX(1.0245);transform-origin:0 0;">Consistent query answering with prioritized active integrity constraints</div>
</div>
<div class="t" style="left:2188.5px;top:1180.98px;font-size:32px;color:#000;letter-spacing:-0.2px;transform:scaleX(1.0177);transform-origin:0 0;">Calautti et al.</div>
<svg class="i" style="left:2905px;top:1192px;" width="26" height="24"><use href="#pdf"/></svg>
<svg class="i" style="left:634px;top:1240px;" width="16" height="24"><use href="#chevrightlt"/></svg>
<svg class="i" style="left:662px;top:1232px;" width="34" height="38"><use href="#docp"/></svg>
<div style="position:absolute;left:700px;top:1224px;width:1470px;height:54px;overflow:hidden">
<div class="t" style="left:7.5px;top:10.24px;font-size:32px;color:#000;letter-spacing:-0.2px;transform:scaleX(1.0102);transform-origin:0 0;">Opinion-aware Answer Generation for Review-driven Question Answering in E-Commerce</div>
</div>
<div class="t" style="left:2188.5px;top:1234.57px;font-size:32px;color:#000;letter-spacing:-0.2px;transform:scaleX(1.0167);transform-origin:0 0;">Deng et al.</div>
<svg class="i" style="left:2905px;top:1245px;" width="26" height="24"><use href="#pdf"/></svg>
<svg class="i" style="left:634px;top:1294px;" width="16" height="24"><use href="#chevrightlt"/></svg>
<svg class="i" style="left:662px;top:1286px;" width="34" height="38"><use href="#docp"/></svg>
<div style="position:absolute;left:700px;top:1278px;width:1470px;height:54px;overflow:hidden">
<div class="t" style="left:7.5px;top:10.24px;font-size:32px;color:#000;letter-spacing:-0.2px;transform:scaleX(1.0394);transform-origin:0 0;">An improved human-in-the-loop model for fine-grained object recognition with batch-based questio…</div>
</div>
<div class="t" style="left:2188.5px;top:1288.16px;font-size:32px;color:#000;letter-spacing:-0.2px;transform:scaleX(1.0125);transform-origin:0 0;">Gutta et al.</div>
<svg class="i" style="left:2905px;top:1299px;" width="26" height="24"><use href="#pdf"/></svg>
<svg class="i" style="left:634px;top:1348px;" width="16" height="24"><use href="#chevrightlt"/></svg>
<svg class="i" style="left:662px;top:1340px;" width="34" height="38"><use href="#docp"/></svg>
<div style="position:absolute;left:700px;top:1332px;width:1470px;height:54px;overflow:hidden">
<div class="t" style="left:7.5px;top:10.24px;font-size:32px;color:#000;letter-spacing:-0.2px;transform:scaleX(1.0025);transform-origin:0 0;">Data-Driven Never-Ending Learning Question Answering Systems</div>
</div>
<div class="t" style="left:2188.5px;top:1341.75px;font-size:32px;color:#000;letter-spacing:-0.2px;transform:scaleX(0.9761);transform-origin:0 0;">Hruschka</div>
<svg class="i" style="left:2905px;top:1353px;" width="26" height="24"><use href="#pdf"/></svg>
<svg class="i" style="left:634px;top:1401px;" width="16" height="24"><use href="#chevrightlt"/></svg>
<svg class="i" style="left:662px;top:1393px;" width="34" height="38"><use href="#docp"/></svg>
<div style="position:absolute;left:700px;top:1385px;width:1470px;height:54px;overflow:hidden">
<div class="t" style="left:7.5px;top:10.24px;font-size:32px;color:#000;letter-spacing:-0.2px;transform:scaleX(1.0365);transform-origin:0 0;">Multi-modal Attentive Graph Pooling Model for Community Question Answer Matching</div>
</div>
<div class="t" style="left:2188.5px;top:1395.34px;font-size:32px;color:#000;letter-spacing:-0.2px;transform:scaleX(1.0165);transform-origin:0 0;">Hu et al.</div>
<svg class="i" style="left:2905px;top:1406px;" width="26" height="24"><use href="#pdf"/></svg>
<svg class="i" style="left:634px;top:1455px;" width="16" height="24"><use href="#chevrightlt"/></svg>
<svg class="i" style="left:662px;top:1447px;" width="34" height="38"><use href="#docp"/></svg>
<div style="position:absolute;left:700px;top:1439px;width:1470px;height:54px;overflow:hidden">
<div class="t" style="left:7.5px;top:10.24px;font-size:32px;color:#000;letter-spacing:-0.2px;transform:scaleX(1.0035);transform-origin:0 0;">Incorporating User Feedback in Conversational Question Answering over Heterogeneous Web Sources</div>
</div>
<div class="t" style="left:2188.5px;top:1448.93px;font-size:32px;color:#000;letter-spacing:-0.2px;transform:scaleX(0.9461);transform-origin:0 0;">Kaiser</div>
<svg class="i" style="left:2905px;top:1460px;" width="26" height="24"><use href="#pdf"/></svg>
<svg class="i" style="left:634px;top:1508px;" width="16" height="24"><use href="#chevrightlt"/></svg>
<svg class="i" style="left:662px;top:1500px;" width="34" height="38"><use href="#docp"/></svg>
<div style="position:absolute;left:700px;top:1492px;width:1470px;height:54px;overflow:hidden">
<div class="t" style="left:7.5px;top:10.24px;font-size:32px;color:#000;letter-spacing:-0.2px;transform:scaleX(0.9999);transform-origin:0 0;">Answering Questions about Charts and Generating Visual Explanations</div>
</div>
<div class="t" style="left:2188.5px;top:1502.52px;font-size:32px;color:#000;letter-spacing:-0.2px;transform:scaleX(1.0070);transform-origin:0 0;">Kim et al.</div>
<svg class="i" style="left:2905px;top:1513px;" width="26" height="24"><use href="#pdf"/></svg>
<svg class="i" style="left:634px;top:1562px;" width="16" height="24"><use href="#chevrightlt"/></svg>
<svg class="i" style="left:662px;top:1554px;" width="34" height="38"><use href="#docp"/></svg>
<div style="position:absolute;left:700px;top:1546px;width:1470px;height:54px;overflow:hidden">
<div class="t" style="left:7.5px;top:10.24px;font-size:32px;color:#000;letter-spacing:-0.2px;transform:scaleX(1.0077);transform-origin:0 0;">Evaluating Surprise Adequacy for Question Answering</div>
</div>
<div class="t" style="left:2188.5px;top:1556.11px;font-size:32px;color:#000;letter-spacing:-0.2px;transform:scaleX(1.0000);transform-origin:0 0;">Kim and Yoo</div>
<svg class="i" style="left:2905px;top:1567px;" width="26" height="24"><use href="#pdf"/></svg>
<div class="r" style="left:2949px;top:313px;width:40px;height:1289px;background:#f0f0f0;"></div>
<div class="r" style="left:2950px;top:353px;width:37px;height:459px;background:#cdcdcd;"></div>
<svg class="i" style="left:2960px;top:327px;" width="19" height="16"><use href="#scrup"/></svg>
<svg class="i" style="left:2960px;top:1573px;" width="19" height="16"><use href="#scrdown"/></svg>
<div class="r" style="left:2989px;top:254px;width:12px;height:1348px;background:#f0f0f0;"></div>
<div class="r" style="left:2989px;top:254px;width:1px;height:1348px;background:#fafafa;"></div>
<div class="r" style="left:3001px;top:254px;width:2px;height:1348px;background:#8a8a8a;"></div>
<svg class="i" style="left:2989px;top:800px;" width="14" height="252"><use href="#splitmark"/></svg>
<div class="r" style="left:23px;top:1601px;width:2980px;height:2px;background:#d0d0d0;"></div>
<div class="r" style="left:619px;top:1601px;width:187px;height:2px;background:#c0201a;"></div>
<div class="r" style="left:806px;top:1601px;width:2195px;height:2px;background:#f1dada;"></div>
<div class="r" style="left:23px;top:1601px;width:112px;height:2px;background:#f6e2e2;"></div>
</body></html>
